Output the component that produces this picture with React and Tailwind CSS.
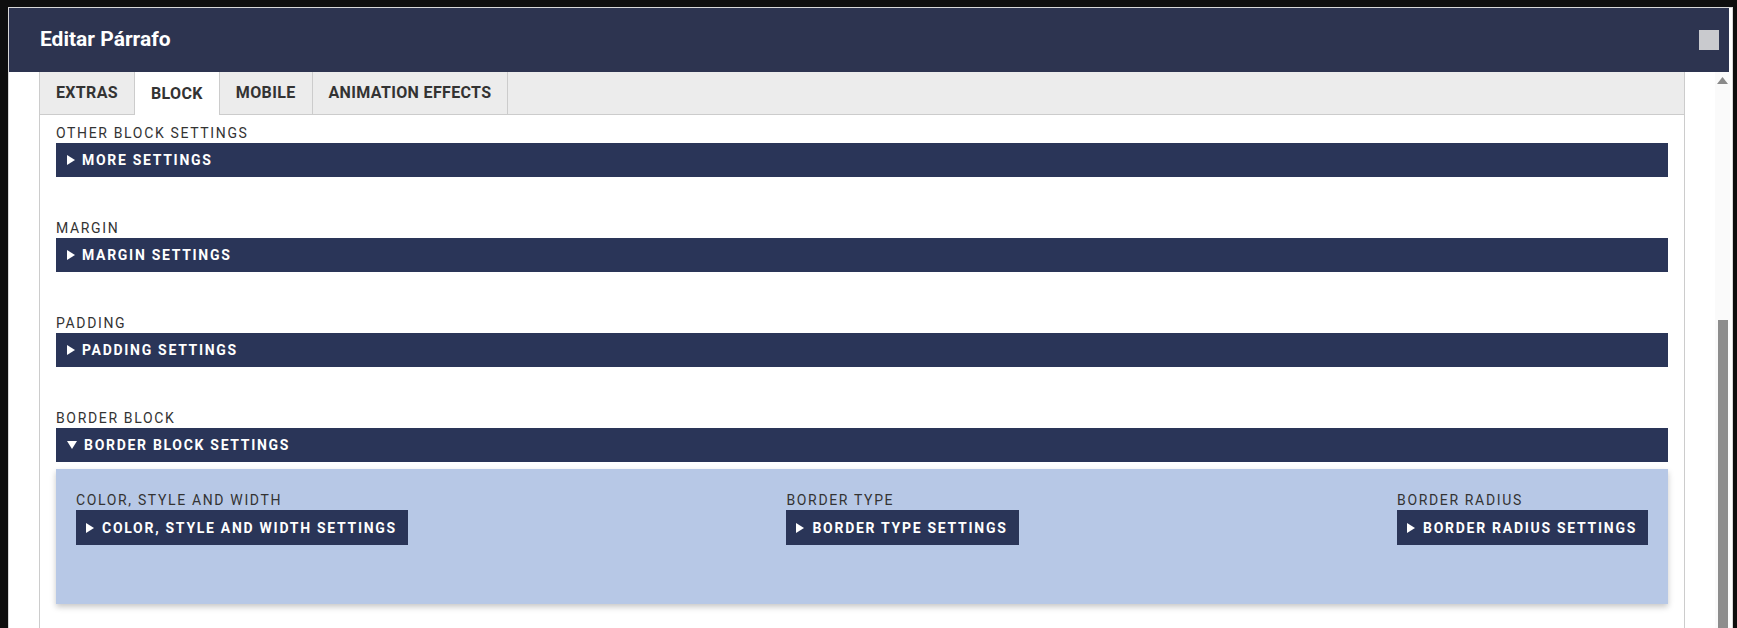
import React from "react";

const font = { fontFamily: "Roboto, 'Noto Sans', sans-serif" };

function Tri({ down }) {
  return down ? (
    <svg width="10" height="8" viewBox="0 0 10 8" className="shrink-0">
      <path d="M0 0 H10 L5 8 Z" fill="white" />
    </svg>
  ) : (
    <svg width="8" height="10" viewBox="0 0 8 10" className="shrink-0">
      <path d="M0 0 L8 5 L0 10 Z" fill="white" />
    </svg>
  );
}

function Bar({ text, down }) {
  return (
    <div className="h-[34px] bg-[#2a3558] flex items-center pl-[11px] gap-[7px]">
      <Tri down={down} />
      <span className="text-white font-bold text-[14px] tracking-[1.7px] leading-none">{text}</span>
    </div>
  );
}

function Label({ text }) {
  return (
    <div className="text-[14px] leading-[20px] tracking-[1.65px] text-[#333]">{text}</div>
  );
}

function Section({ label, bar, down }) {
  return (
    <div className="mb-[41px]">
      <Label text={label} />
      <Bar text={bar} down={down} />
    </div>
  );
}

function InnerItem({ label, bar }) {
  return (
    <div className="flex flex-col">
      <Label text={label} />
      <div className="h-[35px] bg-[#2a3558] flex items-center pl-[10px] pr-[11px] gap-[8px]">
        <Tri />
        <span className="text-white font-bold text-[14px] tracking-[1.72px] leading-none">{bar}</span>
      </div>
    </div>
  );
}

export default function App() {
  const tabs = ["EXTRAS", "BLOCK", "MOBILE", "ANIMATION EFFECTS"];
  return (
    <div style={font} className="w-[1737px] h-[628px] bg-[#0e0e0e] overflow-hidden pt-[7px] pl-[8px]">
      <div className="w-[1725px] h-[700px] bg-white border-l border-r border-t border-[#d8d8d8] flex flex-col">
        <div className="h-[64px] shrink-0 bg-[#2d3450] flex items-center justify-between pl-[31px] pr-[10px] mr-[3px]">
          <span className="text-white font-bold text-[21px]">Editar Párrafo</span>
          <div className="w-[20px] h-[20px] bg-[#c9cace]" />
        </div>
        <div className="flex flex-1">
          <div className="w-[30px] shrink-0" />
          <div className="w-[1646px] shrink-0 border-l border-r border-[#cccccc] flex flex-col">
            <div className="h-[43px] bg-[#ececec] border-b border-[#cccccc] flex">
              {tabs.map((t, i) => (
                <div
                  key={t}
                  className={
                    "px-[16px] flex items-center text-[16px] tracking-[0.35px] font-bold text-[#333] border-r border-[#cccccc] " +
                    (i === 1 ? "bg-white -mb-px" : "")
                  }
                >
                  {t}
                </div>
              ))}
            </div>
            <div className="px-[16px] pt-[8px]">
              <Section label="OTHER BLOCK SETTINGS" bar="MORE SETTINGS" />
              <Section label="MARGIN" bar="MARGIN SETTINGS" />
              <Section label="PADDING" bar="PADDING SETTINGS" />
              <div>
                <Label text="BORDER BLOCK" />
                <Bar text="BORDER BLOCK SETTINGS" down />
              </div>
              <div className="mt-[7px] h-[135px] bg-[#b7c8e6] shadow-[0_3px_6px_rgba(0,0,0,0.22)] px-[20px] pt-[21px] flex justify-between items-start">
                <InnerItem label="COLOR, STYLE AND WIDTH" bar="COLOR, STYLE AND WIDTH SETTINGS" />
                <InnerItem label="BORDER TYPE" bar="BORDER TYPE SETTINGS" />
                <InnerItem label="BORDER RADIUS" bar="BORDER RADIUS SETTINGS" />
              </div>
            </div>
          </div>
          <div className="w-[30px] shrink-0" />
          <div className="w-[15px] shrink-0 bg-[#fafafa] flex flex-col items-center">
            <svg width="11" height="7" viewBox="0 0 11 7" className="mt-[5px]">
              <path d="M0 7 L5.5 0 L11 7 Z" fill="#8a8a8a" />
            </svg>
            <div className="mt-[236px] w-[10px] flex-1 bg-[#8d8d8d]" />
          </div>
        </div>
      </div>
    </div>
  );
}
